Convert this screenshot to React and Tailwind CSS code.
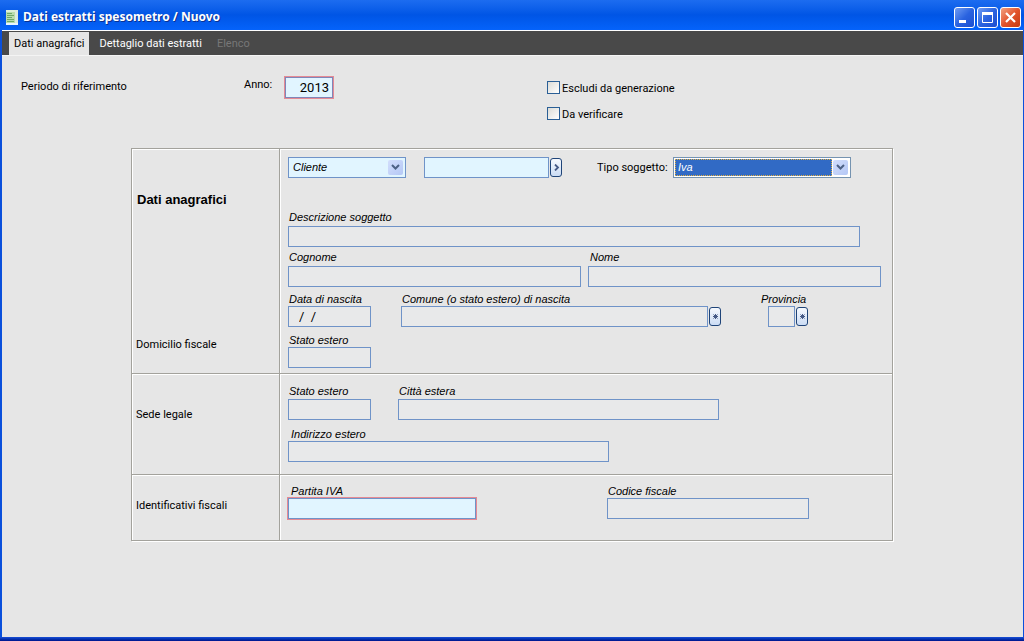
import { useState } from 'react'

const UI_FONT = "font-['Roboto','Liberation_Sans',sans-serif]"
const LABEL = "block font-['Liberation_Sans',sans-serif] text-[11px] italic leading-[14px] whitespace-nowrap"
const BOX = 'block h-[21px] border border-[#6f93c8] text-[13px] outline-none'

const TABS = [
  { id: 'anagrafici', label: 'Dati anagrafici' },
  { id: 'dettaglio', label: 'Dettaglio dati estratti' },
  { id: 'elenco', label: 'Elenco', disabled: true },
]

function AppIcon() {
  return (
    <svg width="12" height="15" viewBox="0 0 12 15" aria-hidden="true">
      <rect width="12" height="15" fill="#b9dcae" />
      <rect x="0" y="0" width="12" height="2" fill="#dcefd8" />
      <rect x="9" y="0" width="3" height="15" fill="#dcebdc" />
      <path d="M1 3.5h5M1 5.5h7M1 7.5h5M1 9.5h7M1 11.5h7" stroke="#6fa968" />
      <path d="M0 14h12" stroke="#e9f5ff" strokeWidth="2" />
    </svg>
  )
}

function WindowButton({ label, close, children }) {
  return (
    <button
      aria-label={label}
      className={`flex h-[21px] w-[21px] items-center justify-center rounded-[3px] border border-white bg-linear-to-br ${
        close ? 'from-[#f0a080] via-[#e2532c] to-[#c43a12]' : 'from-[#6f9bf2] via-[#2a63e0] to-[#1c4ed0]'
      }`}
    >
      <svg width="19" height="19" viewBox="0 0 19 19" fill="none" stroke="#fff">
        {children}
      </svg>
    </button>
  )
}

function LookupButton({ label, star }) {
  return (
    <button
      aria-label={label}
      className="flex h-[19px] w-3 shrink-0 items-center justify-center rounded-[3px] border border-[#1f4478] bg-linear-to-b from-[#f6f9fe] to-[#cbdcf4]"
    >
      <svg width="7" height="7" viewBox="0 0 7 7" fill="none" stroke="#465a86">
        {star
          ? <path d="M3.5 1v5M1 3.5h5M1.5 1.5l4 4M5.5 1.5l-4 4" />
          : <path d="M2 .5l3 3-3 3" strokeWidth="1.8" />}
      </svg>
    </button>
  )
}

function Field({ id, label, className = '', labelClass = 'pl-px', boxClass = 'px-1', required, value = '', action }) {
  return (
    <div className={`min-w-0 ${className}`}>
      <label htmlFor={id} className={`${LABEL} ${labelClass}`}>{label}</label>
      <div className="flex items-center gap-px">
        <input
          id={id}
          defaultValue={value}
          className={`${BOX} w-full min-w-0 ${boxClass} ${
            required ? 'bg-[#e1f5ff] shadow-[0_0_0_1px_#e58a94]' : 'bg-[#e8e9ea]'
          }`}
        />
        {action && <LookupButton label={action} star />}
      </div>
    </div>
  )
}

function DropArrow() {
  return (
    <span className="pointer-events-none absolute top-[2px] right-[2px] flex h-[15px] w-[15px] items-center justify-center rounded-[2px] bg-linear-to-br from-[#d3defc] to-[#b4c7f5]">
      <svg width="9" height="7" viewBox="0 0 9 7" fill="none" stroke="#4d6185" strokeWidth="2">
        <path d="M1 1l3.5 3.5L8 1" />
      </svg>
    </span>
  )
}

function Check({ label }) {
  return (
    <label className="flex h-[13px] items-center gap-[2px] leading-[13px] whitespace-nowrap">
      <input
        type="checkbox"
        className="h-[13px] w-[13px] appearance-none border border-[#2a5f96] bg-linear-to-br from-[#dcdcd7] to-white checked:bg-[#21a121]"
      />
      <span className="pt-[2px]">{label}</span>
    </label>
  )
}

// one horizontal band of the panel: caption on the left, fields on the right
function Section({ caption, last, children }) {
  return (
    <section className={`flex ${last ? '' : 'border-b border-[#a3a29c] shadow-[0_1px_0_#fff]'}`}>
      <div className="w-[148px] shrink-0 border-r border-[#a3a29c] pl-1 shadow-[1px_0_0_#fff]">{caption}</div>
      <div className="min-w-0 grow pl-2">{children}</div>
    </section>
  )
}

export default function App() {
  const [tab, setTab] = useState('anagrafici')

  return (
    <div className={`flex min-h-screen flex-col bg-[#0a50dc] text-[11px] text-black ${UI_FONT}`}>
      <header className="flex h-[30px] items-center bg-linear-to-b from-[#1c6cf0] via-[#0055e5] to-[#0563fb] pt-1 pr-[3px] pl-[6px]">
        <AppIcon />
        <h1 className="ml-[5px] grow font-['Noto_Sans',sans-serif] text-[12px] font-bold text-white [text-shadow:1px_1px_0_#0b3190]">
          Dati estratti spesometro / Nuovo
        </h1>
        <div className="flex gap-[2px]">
          <WindowButton label="Riduci a icona"><path d="M4 13.5h7" strokeWidth="3" /></WindowButton>
          <WindowButton label="Ingrandisci">
            <path d="M4.5 5v9.5h10V5" />
            <path d="M4 5.5h11" strokeWidth="3" />
          </WindowButton>
          <WindowButton label="Chiudi" close><path d="M5 5l9 9M14 5l-9 9" strokeWidth="2.2" /></WindowButton>
        </div>
      </header>

      <div className="mr-px ml-[2px] flex grow flex-col border-t border-white bg-[#e6e6e6]">
        <nav className="flex h-[25px] gap-[5px] border-b border-[#f4f4f4] bg-[#494949] pt-px pl-[7px]">
          {TABS.map(t => (
            <button
              key={t.id}
              disabled={t.disabled}
              onClick={() => setTab(t.id)}
              className={`px-[5px] pt-px whitespace-nowrap ${
                tab === t.id ? 'bg-[#e6e6e6] text-black' : t.disabled ? 'text-[#777]' : 'text-white'
              }`}
            >
              {t.label}
            </button>
          ))}
        </nav>

        <main className="grow pt-5">
          <div className="flex items-start pl-[19px]">
            <span className="w-[223px] leading-[22px]">Periodo di riferimento</span>
            <label htmlFor="anno" className="w-10 leading-[18px]">Anno:</label>
            <input
              id="anno"
              defaultValue="2013"
              className="h-[23px] w-[50px] border border-[#e58a94] bg-[#e1f5ff] pr-1 text-right text-[13px] shadow-[inset_0_0_0_1px_#7f86b8] outline-none"
            />
            <div className="ml-[213px] flex flex-col gap-[13px] pt-[5px]">
              <Check label="Escludi da generazione" />
              <Check label="Da verificare" />
            </div>
          </div>

          <div className="mt-7 mr-4 ml-[129px] max-w-[762px] border border-[#a3a29c] shadow-[1px_1px_0_#fff,inset_1px_1px_0_#fff]">
            <Section
              caption={
                <>
                  <h2 className="pt-10 pl-px font-['Liberation_Sans',sans-serif] text-[13px] leading-[22px] font-bold">Dati anagrafici</h2>
                  <p className="pt-[123px] leading-[22px]">Domicilio fiscale</p>
                </>
              }
            >
              <div className="flex items-center pt-2">
                <div className="relative h-[21px] w-[118px] border border-[#6f93c8] bg-[#e1f5ff]">
                  <select aria-label="Soggetto" className="block h-full w-full appearance-none pl-1 font-['Liberation_Sans',sans-serif] italic outline-none">
                    <option>Cliente</option>
                    <option>Fornitore</option>
                  </select>
                  <DropArrow />
                </div>
                <div className="ml-[18px] flex items-center gap-px">
                  <input aria-label="Codice soggetto" className={`${BOX} w-[125px] bg-[#e1f5ff] px-1`} />
                  <LookupButton label="Cerca soggetto" />
                </div>
                <label htmlFor="tipo" className="ml-[35px] w-[76px] pt-[2px] whitespace-nowrap">Tipo soggetto:</label>
                <div className="relative h-[21px] w-[178px] border border-[#7593b0] bg-white p-px">
                  <select id="tipo" className="block h-[17px] w-[157px] appearance-none border border-dotted border-[#e0b040] bg-[#316ac5] pl-[2px] font-['Liberation_Sans',sans-serif] leading-[15px] text-white italic outline-none">
                    <option>Iva</option>
                    <option>Privato</option>
                  </select>
                  <DropArrow />
                </div>
              </div>

              <Field id="descrizione" label="Descrizione soggetto" className="mt-8 w-[572px]" labelClass="pb-[2px] pl-px" />
              <div className="mt-[3px] flex gap-[7px]">
                <Field id="cognome" label="Cognome" className="w-[293px]" labelClass="pb-[2px] pl-px" />
                <Field id="nome" label="Nome" className="w-[293px]" labelClass="pb-[2px] pl-[2px]" />
              </div>
              <div className="mt-[5px] flex">
                <Field id="nascita" label="Data di nascita" className="w-[83px]" boxClass="pl-[10px]" value="/  /" />
                <Field id="comune" label="Comune (o stato estero) di nascita" className="ml-[30px] w-[320px]" action="Cerca comune" />
                <Field id="provincia" label="Provincia" className="ml-10 w-[47px]" labelClass="" boxClass="ml-[7px]" action="Cerca provincia" />
              </div>
              <Field id="domicilio-stato" label="Stato estero" className="mt-[6px] mb-[5px] w-[83px]" />
            </Section>

            <Section caption={<p className="pt-[30px] leading-[22px]">Sede legale</p>}>
              <div className="flex pt-[10px]">
                <Field id="sede-stato" label="Stato estero" className="w-[83px]" labelClass="pb-px pl-px" />
                <Field id="citta" label="Città estera" className="ml-[27px] w-[321px]" labelClass="pb-px pl-px" />
              </div>
              <Field id="indirizzo" label="Indirizzo estero" className="mt-[7px] mb-3 w-[321px]" labelClass="pl-[3px]" />
            </Section>

            <Section last caption={<p className="pt-5 leading-[22px]">Identificativi fiscali</p>}>
              <div className="flex pt-[9px] pb-[21px]">
                <Field id="piva" label="Partita IVA" className="w-[188px]" labelClass="pl-[3px]" required />
                <Field id="cf" label="Codice fiscale" className="ml-[131px] w-[202px]" />
              </div>
            </Section>
          </div>
        </main>
      </div>
      <div className="h-1 bg-linear-to-b from-[#1a4fd8] to-[#00138c]" />
    </div>
  )
}
